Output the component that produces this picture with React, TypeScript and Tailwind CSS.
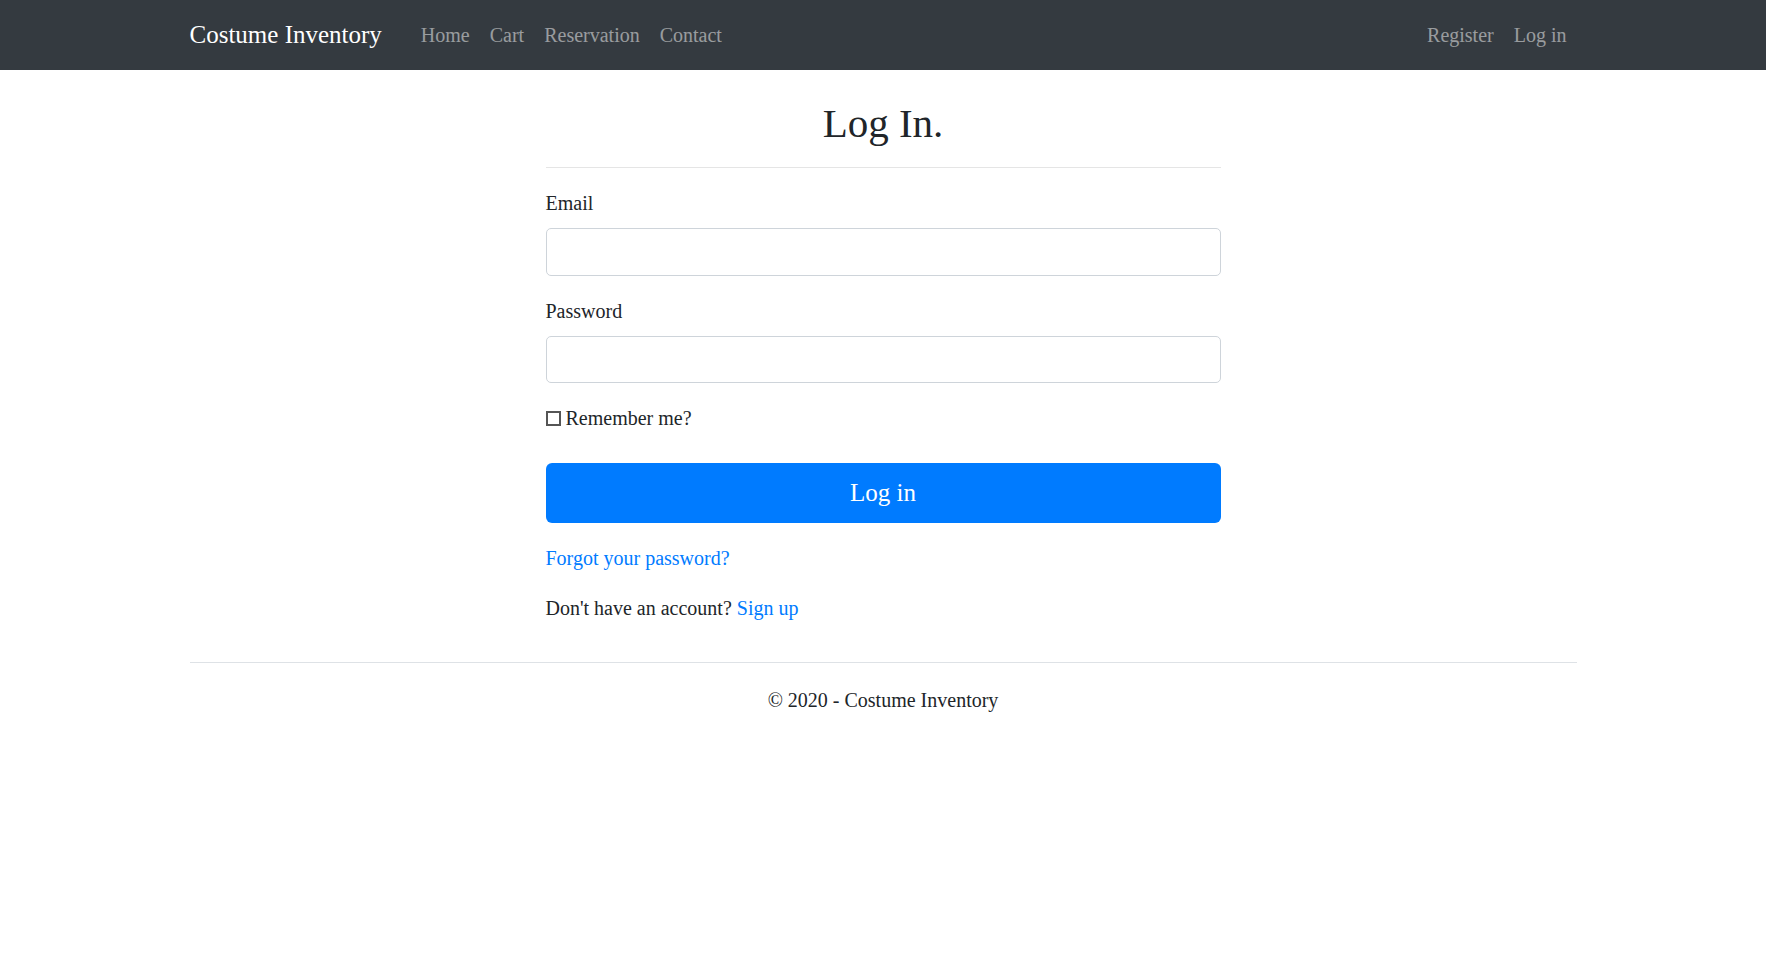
export default function App() {
  return (
    <div className="min-h-screen bg-white text-[#212529] text-[20px] leading-[30px]" style={{ fontFamily: '"Liberation Serif", "Times New Roman", serif' }}>
      {/* Navbar */}
      <header>
        <nav className="h-[70px] bg-[#343a40]">
          <div className="mx-auto flex h-full w-[1425px] items-center px-[19px]">
            <a href="#" className="mr-[29px] text-[25px] leading-[38px] text-white">
              Costume Inventory
            </a>
            <ul className="flex">
              {['Home', 'Cart', 'Reservation', 'Contact'].map((item) => (
                <li key={item}>
                  <a href="#" className="block px-[10px] text-white/50">
                    {item}
                  </a>
                </li>
              ))}
            </ul>
            <ul className="ml-auto flex">
              {['Register', 'Log in'].map((item) => (
                <li key={item}>
                  <a href="#" className="block px-[10px] text-white/50">
                    {item}
                  </a>
                </li>
              ))}
            </ul>
          </div>
        </nav>
      </header>

      {/* Login form */}
      <main className="mx-auto w-[675px]">
        <h2 className="mt-[29px] text-center text-[41px] leading-[48px]">Log In.</h2>
        <hr className="mt-[20px] border-t border-black/10" />

        <form className="mt-[20px]">
          <div className="mb-[20px]">
            <label className="mb-[10px] block">Email</label>
            <input type="email" className="block h-[47.5px] w-full rounded-[5px] border border-[#ced4da] px-[15px] outline-none" />
          </div>
          <div className="mb-[20px]">
            <label className="mb-[10px] block">Password</label>
            <input type="password" className="block h-[47.5px] w-full rounded-[5px] border border-[#ced4da] px-[15px] outline-none" />
          </div>
          <div className="mb-[30px]">
            <label className="flex items-center">
              <input type="checkbox" className="mr-[5px] h-[15px] w-[15px] appearance-none border-2 border-[#555] bg-white" />
              Remember me?
            </label>
          </div>
          <div className="mb-[20px]">
            <button type="button" className="block h-[60px] w-full rounded-[6px] bg-[#007bff] text-[25px] text-white">
              Log in
            </button>
          </div>
        </form>

        <p className="mb-[20px]">
          <a href="#" className="text-[#007bff]">Forgot your password?</a>
        </p>
        <p>
          Don't have an account? <a href="#" className="text-[#007bff]">Sign up</a>
        </p>
      </main>

      {/* Footer */}
      <footer className="mx-auto mt-[39px] w-[1425px] px-[19px]">
        <div className="border-t border-[#dee2e6] pt-[22px] text-center">
          © 2020 - Costume Inventory
        </div>
      </footer>
    </div>
  );
}
